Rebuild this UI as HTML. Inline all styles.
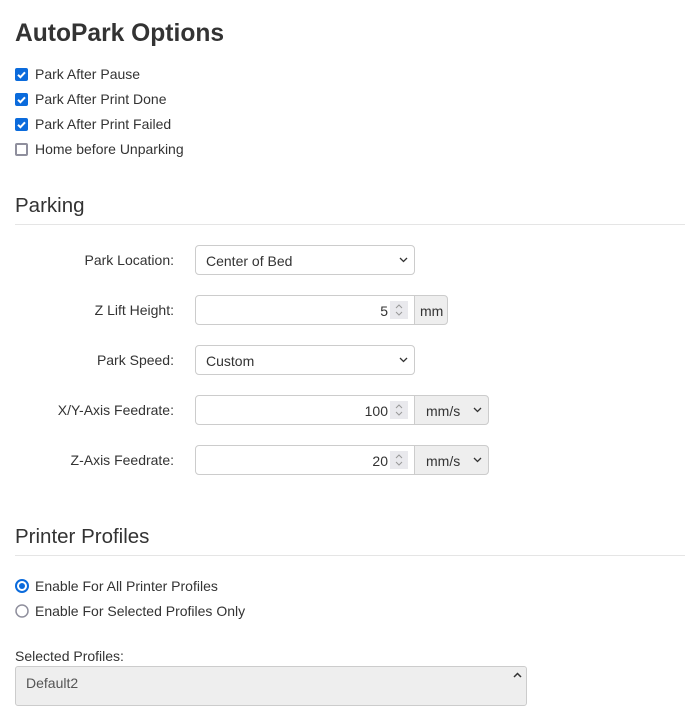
<!DOCTYPE html>
<html><head><style>
body{margin:0;width:686px;height:695px;overflow:hidden;background:#fff;font-family:"Liberation Sans",Arial,sans-serif;color:#333;position:relative}
.a{position:absolute}
h1{position:absolute;left:15px;top:20px;margin:0;font-size:24.6px;font-weight:bold;color:#333}
.cb{position:absolute;left:15px;width:13px;height:13px;border-radius:2px;box-sizing:border-box}
.on{background:#0b6bdc}
.off{border:2px solid #8f8f9d;background:#fff}
.t{position:absolute;font-size:14px;color:#333;white-space:nowrap}
h2{position:absolute;left:15px;margin:0;font-size:20.5px;font-weight:normal;color:#333}
.hr{position:absolute;left:15px;width:670px;height:1px;background:#e5e5e5}
.lbl{position:absolute;right:512px;font-size:14px;white-space:nowrap}
.box{position:absolute;height:30px;box-sizing:border-box;border:1px solid #ccc;background:#fff;font-size:14px}
.sel{border-radius:4px;padding:7px 10px}
.chev{position:absolute;right:6px;top:11px}
.spin{position:absolute;right:6px;top:5px;width:18px;height:18px;background:#e9e9ed}
.add{position:absolute;height:30px;box-sizing:border-box;border:1px solid #ccc;background:#eee;font-size:14px;border-radius:0 4px 4px 0;padding:7px 5px}
</style></head><body>
<h1>AutoPark Options</h1>
<svg width="0" height="0" style="position:absolute"><defs><symbol id="ck" viewBox="0 0 13 13"><path d="M3 6.8l2.4 2.4L10 4.3" stroke="#fff" stroke-width="2" fill="none"/></symbol></defs></svg>
<div class="cb on" style="top:68px"><svg width="13" height="13"><use href="#ck"/></svg></div>
<div class="t" style="left:35px;top:66px">Park After Pause</div>
<div class="cb on" style="top:93px"><svg width="13" height="13"><use href="#ck"/></svg></div>
<div class="t" style="left:35px;top:91px">Park After Print Done</div>
<div class="cb on" style="top:118px"><svg width="13" height="13"><use href="#ck"/></svg></div>
<div class="t" style="left:35px;top:116px">Park After Print Failed</div>
<div class="cb off" style="top:143px"></div>
<div class="t" style="left:35px;top:141px">Home before Unparking</div>

<h2 style="top:194px">Parking</h2>
<div class="hr" style="top:224px"></div>

<div class="lbl" style="top:252px">Park Location:</div>
<div class="box sel" style="left:195px;top:245px;width:220px">Center of Bed<svg class="chev" width="9" height="6"><path d="M1 1l3.5 3.5L8 1" stroke="#333" stroke-width="1.3" fill="none"/></svg></div>

<div class="lbl" style="top:302px">Z Lift Height:</div>
<div class="box" style="left:195px;top:295px;width:220px;border-radius:4px 0 0 4px;text-align:right;padding:7px 26px 0 0">5<div class="spin"><svg width="18" height="18"><path d="M6 7l3-3 3 3M6 11l3 3 3-3" stroke="#999" fill="none"/></svg></div></div>
<div class="add" style="left:414px;top:295px;width:34px">mm</div>

<div class="lbl" style="top:352px">Park Speed:</div>
<div class="box sel" style="left:195px;top:345px;width:220px">Custom<svg class="chev" width="9" height="6"><path d="M1 1l3.5 3.5L8 1" stroke="#333" stroke-width="1.3" fill="none"/></svg></div>

<div class="lbl" style="top:402px">X/Y-Axis Feedrate:</div>
<div class="box" style="left:195px;top:395px;width:220px;border-radius:4px 0 0 4px;text-align:right;padding:7px 26px 0 0">100<div class="spin"><svg width="18" height="18"><path d="M6 7l3-3 3 3M6 11l3 3 3-3" stroke="#999" fill="none"/></svg></div></div>
<div class="add" style="left:414px;top:395px;width:75px;padding-left:11px">mm/s<svg class="chev" width="9" height="6"><path d="M1 1l3.5 3.5L8 1" stroke="#333" stroke-width="1.3" fill="none"/></svg></div>

<div class="lbl" style="top:452px">Z-Axis Feedrate:</div>
<div class="box" style="left:195px;top:445px;width:220px;border-radius:4px 0 0 4px;text-align:right;padding:7px 26px 0 0">20<div class="spin"><svg width="18" height="18"><path d="M6 7l3-3 3 3M6 11l3 3 3-3" stroke="#999" fill="none"/></svg></div></div>
<div class="add" style="left:414px;top:445px;width:75px;padding-left:11px">mm/s<svg class="chev" width="9" height="6"><path d="M1 1l3.5 3.5L8 1" stroke="#333" stroke-width="1.3" fill="none"/></svg></div>

<h2 style="top:525px">Printer Profiles</h2>
<div class="hr" style="top:555px"></div>

<svg class="a" style="left:15px;top:579px" width="14" height="14"><circle cx="7" cy="7" r="6" fill="#fff" stroke="#0b6bdc" stroke-width="2"/><circle cx="7" cy="7" r="3" fill="#0b6bdc"/></svg>
<div class="t" style="left:35px;top:578px">Enable For All Printer Profiles</div>
<svg class="a" style="left:15px;top:604px" width="14" height="14"><circle cx="7" cy="7" r="6" fill="#fff" stroke="#8f8f9d" stroke-width="1.5"/></svg>
<div class="t" style="left:35px;top:603px">Enable For Selected Profiles Only</div>

<div class="t" style="left:15px;top:648px">Selected Profiles:</div>
<div class="a" style="left:15px;top:666px;width:512px;height:40px;box-sizing:border-box;border:1px solid #ccc;border-radius:3px;background:#eee;font-size:14px;padding:8px 10px;color:#555">Default2<svg class="a" style="right:4px;top:5px" width="9" height="6"><path d="M1 5l3.5-3.5L8 5" stroke="#333" stroke-width="1.5" fill="none"/></svg></div>
</body></html>
